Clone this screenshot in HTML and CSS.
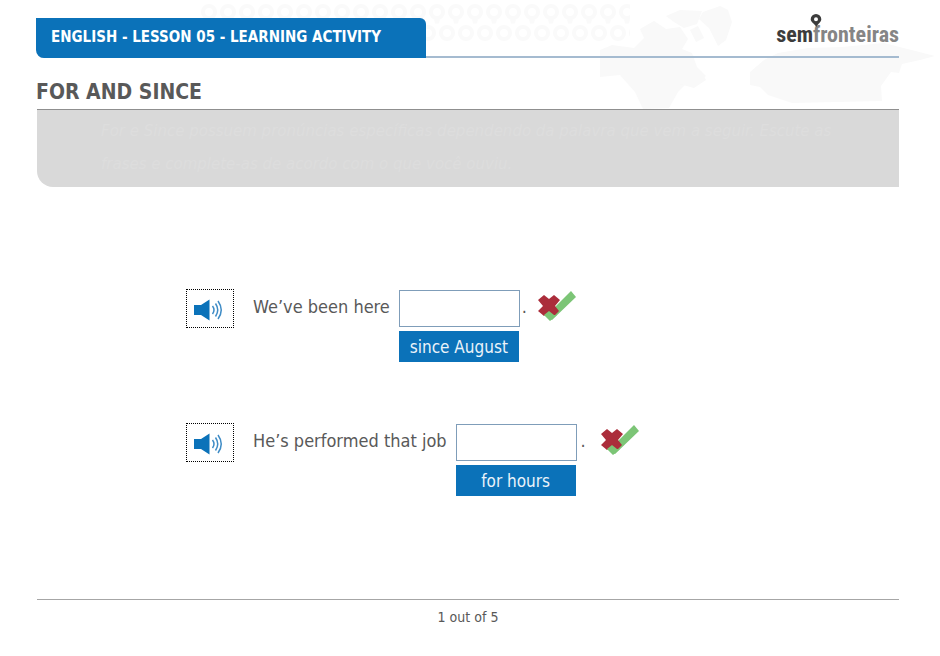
FILE: index.html
```html
<!DOCTYPE html>
<html lang="en">
<head>
<meta charset="utf-8">
<title>English - Lesson 05 - Learning Activity</title>
<link rel="stylesheet" href="styles.css">
</head>
<body>
<svg class="backdrop" viewBox="0 0 740 110" width="740" height="110" aria-hidden="true">
  <defs>
    <pattern id="pins" width="19" height="42" patternUnits="userSpaceOnUse">
      <g fill="none" stroke="#fafafa" stroke-width="4">
        <circle cx="9" cy="12" r="6"/><path d="M8 19l1 4 1-4"/>
        <path d="M6 33a6 6 0 0 1-6 6M0 27a6 6 0 0 1 6 6M13 33a6 6 0 0 1 6-6M19 39a6 6 0 0 1-6-6"/>
      </g>
    </pattern>
  </defs>
  <rect x="0" y="0" width="430" height="42" fill="url(#pins)"/>
  <g fill="#f9f9f9">
    <path d="M400 50l12-5 22 3 10-10-4-9 14-8 12 8 14-2 8 12-6 10 10 4 5 14 9 9-8 5-12 3-8 8-9 16-26 1-8-17-15-17-20 2z"/>
    <path d="M466 16l14-6 22 1-5 13-13 4-10-6zM490 30l8-4 6 12-8 4z"/>
    <path d="M503 12l17-6 8 4 4 12-6 18-8 6-9-18-10-9z"/>
    <path d="M480 64l22 8 4 8-12 8-14-4zM550 72l14-12 14-7 30-5 34-1 42-4 51 13-15 4-18 4-3 9-8-1-10 14 1 15-90 2-24-8-8-8-10-2z"/>
  </g>
</svg>
<div class="page">
  <header class="topbar">
    <div class="lesson">ENGLISH - LESSON 05 - LEARNING ACTIVITY</div>
    <div class="brand"><span class="brand-name"><span class="sem">sem</span>fronteiras</span>
      <svg class="brand-pin" viewBox="0 0 12 14" width="12" height="14" aria-hidden="true"><path fill="#3c3c3c" fill-rule="evenodd" d="M6 0a5.300 5.300 0 0 1 5.300 5.300c0 3-3.300 4.200-5 7.700C4.600 9.500.7 8.300.7 5.300A5.300 5.300 0 0 1 6 0zm0 3.300a2 2 0 1 0 0 4 2 2 0 0 0 0-4z"/></svg>
    </div>
  </header>
  <h1>FOR AND SINCE</h1>
  <p class="instructions">For e Since possuem pronúncias específicas dependendo da palavra que vem a seguir. Escute as<br>frases e complete-as de acordo com o que você ouviu.</p>
  <main>
    <div class="exercise">
      <button class="listen" type="button" aria-label="Listen"><svg viewBox="0 0 30 22" width="30" height="22" aria-hidden="true"><path fill="#0b72b9" d="M0 6h7l8.500-5.500v21L7 16H0z"/><path fill="none" stroke="#3f8cc6" stroke-width="1.500" d="M18.500 7q3 4 0 8M21.500 4.500q4.500 6.500 0 13M24 2q6.500 9 0 18"/></svg></button>
      <label for="gap1">We’ve been here</label>
      <div class="answer"><input id="gap1" type="text"><button class="option" type="button">since August</button></div>
      <span class="stop">.</span>
      <svg class="mark" viewBox="0 0 38 31" width="38" height="31" aria-hidden="true"><path d="M5 23l9-7 3 0L33 0l5 6-24 23z" fill="#7cc576"/><path d="M0 9l6-5 5 4 5-4 6 5-5 6 4 5-5 5-5-4-5 4-6-5 5-5z" fill="#ab2d3b"/><path d="M6 24l5-4 5 4 3 0-7 6z" fill="#7cc576"/></svg>
    </div>
    <div class="exercise">
      <button class="listen" type="button" aria-label="Listen"><svg viewBox="0 0 30 22" width="30" height="22" aria-hidden="true"><path fill="#0b72b9" d="M0 6h7l8.500-5.500v21L7 16H0z"/><path fill="none" stroke="#3f8cc6" stroke-width="1.500" d="M18.500 7q3 4 0 8M21.500 4.500q4.500 6.500 0 13M24 2q6.500 9 0 18"/></svg></button>
      <label for="gap2">He’s performed that job</label>
      <div class="answer"><input id="gap2" type="text"><button class="option" type="button">for hours</button></div>
      <span class="stop spaced">.</span>
      <svg class="mark" viewBox="0 0 38 31" width="38" height="31" aria-hidden="true"><path d="M5 23l9-7 3 0L33 0l5 6-24 23z" fill="#7cc576"/><path d="M0 9l6-5 5 4 5-4 6 5-5 6 4 5-5 5-5-4-5 4-6-5 5-5z" fill="#ab2d3b"/><path d="M6 24l5-4 5 4 3 0-7 6z" fill="#7cc576"/></svg>
    </div>
  </main>
  <footer>1 out of 5</footer>
</div>
</body>
</html>
```
FILE: styles.css
```css
* { box-sizing: border-box; }
body {
  margin: 0;
  background: #fff;
  color: #595959;
  font-family: "DejaVu Sans Condensed", "Noto Sans", sans-serif;
}
.backdrop { position: absolute; top: 0; right: 0; z-index: -1; }
.page { padding: 18px 41px 0 36px; }
.topbar {
  display: flex;
  justify-content: space-between;
  height: 40px;
  border-bottom-left-radius: 8px;
  background: linear-gradient(#a5bbd0, #a5bbd0) bottom / 100% 2px no-repeat;
}
.lesson {
  width: 390px;
  padding-left: 15px;
  border-radius: 0 6px 0 8px;
  background: #0b72b9;
  color: #fff;
  font-size: 15px;
  font-weight: 700;
  line-height: 38px;
}
.brand { position: relative; }
.brand-name {
  color: #858585;
  font-family: "Roboto Condensed", "Liberation Sans Narrow", Roboto, sans-serif;
  font-size: 22px;
  font-weight: 700;
  line-height: 34px;
}
.sem { color: #3c3c3c; }
.brand-pin { position: absolute; left: 34px; top: -4px; }
h1 {
  margin: 18px 0 0;
  font-size: 21px;
  font-weight: 700;
  line-height: 33px;
}
.instructions {
  margin: 0 0 0 1px;
  height: 78px;
  padding: 5px 16px 0 64px;
  border-top: 1px solid #8f8f8f;
  border-bottom-left-radius: 16px;
  background: #d9d9d9;
  color: #dddddd;
  font-family: "DejaVu Sans", sans-serif;
  font-size: 15px;
  font-style: italic;
  line-height: 33px;
}
main {
  display: grid;
  gap: 61px;
  padding: 102px 0 103px 150px;
}
.exercise { display: flex; align-items: flex-start; }
.listen {
  display: flex;
  width: 48px;
  height: 39px;
  margin-right: 19px;
  padding: 2px 0 0 7px;
  align-items: center;
  border: 1px dotted #000;
  background: #fff;
}
label, .stop { font-size: 18px; line-height: 36px; }
.answer {
  display: grid;
  gap: 4px;
  width: 121px;
  margin: 1px 0 0 9px;
}
input {
  width: 100%;
  height: 37px;
  border: 1px solid #7f9db9;
  background: #fff;
  font: inherit;
}
.option {
  width: 120px;
  height: 31px;
  padding: 0;
  border: 0;
  background: #0b72b9;
  color: #eaf3fa;
  font-family: inherit;
  font-size: 17px;
}
.stop { margin-left: 2px; width: 16px; }
.spaced { margin-left: 4px; width: 20px; }
.mark { margin-top: 2px; }
footer {
  margin-left: 1px;
  border-top: 1px solid #a6a6a6;
  font-size: 14px;
  line-height: 35px;
  text-align: center;
}
```
